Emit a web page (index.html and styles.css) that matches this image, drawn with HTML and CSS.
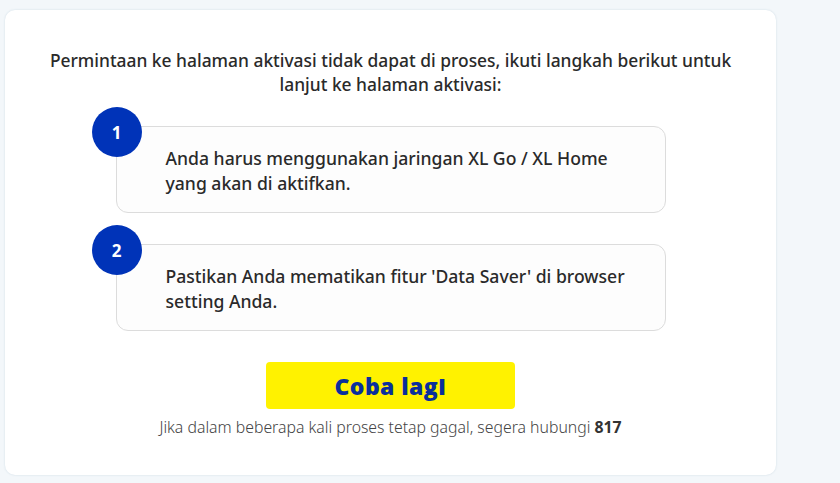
FILE: index.html
```html
<!DOCTYPE html>
<html lang="id">
<head>
<meta charset="utf-8">
<link rel="stylesheet" href="styles.css">
</head>
<body>
<div class="page">
  <div class="card">
    <p class="heading">Permintaan ke halaman aktivasi tidak dapat di proses, ikuti langkah berikut untuk<br>lanjut ke halaman aktivasi:</p>
    <div class="steps">
      <div class="step">
        <span class="num">1</span>
        <p class="step-text">Anda harus menggunakan jaringan XL Go / XL Home<br>yang akan di aktifkan.</p>
      </div>
      <div class="step">
        <span class="num">2</span>
        <p class="step-text">Pastikan Anda mematikan fitur 'Data Saver' di browser<br>setting Anda.</p>
      </div>
    </div>
    <button class="retry" type="button">Coba lagI</button>
    <p class="note">Jika dalam beberapa kali proses tetap gagal, segera hubungi <b>817</b></p>
  </div>
</div>
</body>
</html>
```
FILE: styles.css
```css
html, body {
  margin: 0;
  padding: 0;
  background: #f3f7fa;
}
.page {
  padding: 10px 64px 8px 5px;
  font-family: "Noto Sans", "Open Sans", sans-serif;
}
.card {
  background: #ffffff;
  border-radius: 10px;
  box-shadow: 0 0 2px rgba(200, 215, 225, 0.9);
  height: 465px;
  box-sizing: border-box;
  padding-top: 38px;
  display: flex;
  flex-direction: column;
  align-items: center;
}
.heading {
  margin: 0;
  font-size: 17.4px;
  line-height: 24px;
  font-weight: 500;
  color: #2a2a2a;
  text-align: center;
}
.steps {
  margin-top: 30px;
  width: 550px;
  display: flex;
  flex-direction: column;
  gap: 31px;
}
.step {
  position: relative;
  border: 1px solid #dcdcdc;
  border-radius: 12px;
  background: #fdfdfd;
  padding: 19px 20px 16px 49px;
}
.num {
  position: absolute;
  left: -25px;
  top: -20px;
  width: 50px;
  height: 50px;
  border-radius: 50%;
  background: #0033b8;
  color: #ffffff;
  font-weight: 700;
  font-size: 17px;
  display: flex;
  align-items: center;
  justify-content: center;
}
.step-text {
  margin: 0;
  font-size: 17.6px;
  line-height: 25px;
  font-weight: 500;
  color: #2a2a2a;
}
.retry {
  margin-top: 31px;
  width: 249px;
  height: 47px;
  border: none;
  border-radius: 4px;
  background: #fff200;
  color: #0a2f9c;
  font-family: "Open Sans", sans-serif;
  font-weight: 800;
  font-size: 23px;
  letter-spacing: 0.4px;
  cursor: pointer;
}
.note {
  margin: 8px 0 0;
  font-size: 15.8px;
  line-height: 20px;
  font-weight: 300;
  color: #444444;
}
.note b {
  font-weight: 700;
  color: #333333;
}
```
